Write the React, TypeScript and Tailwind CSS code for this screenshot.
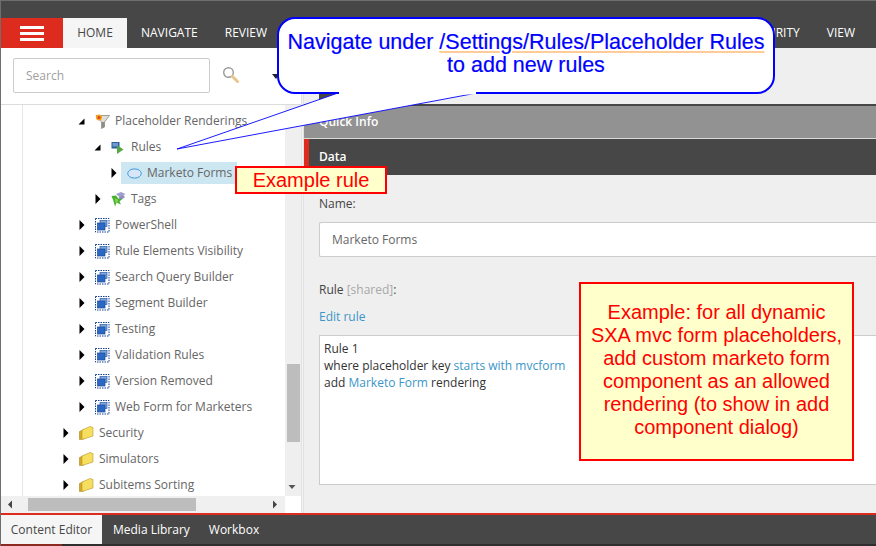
const sans = "font-['Open_Sans',sans-serif]";

function Expanded() {
  return (
    <svg width="7" height="7" viewBox="0 0 7 7" className="shrink-0">
      <path d="M6.5 0.5V6.5H0.5Z" fill="#000" />
    </svg>
  );
}

function Collapsed() {
  return (
    <svg width="6" height="10" viewBox="0 0 6 10" className="shrink-0">
      <path d="M0.5 0V10L5.5 5Z" fill="#000" />
    </svg>
  );
}

function Funnel() {
  return (
    <svg width="15" height="15" viewBox="0 0 15 15">
      <path d="M1 1.5H14.5L9.5 8V13L6.5 14.5V8Z" fill="#dededa" stroke="#8d8a84" strokeWidth="0.8" />
      <path d="M7 8H9.5V13L7 14Z" fill="#8d8d88" />
      <circle cx="4" cy="3.4" r="3" fill="#f3a31d" />
      <circle cx="4" cy="3.4" r="1.5" fill="#e5401e" />
    </svg>
  );
}

function RuleIcon() {
  return (
    <svg width="13" height="13" viewBox="0 0 13 13">
      <rect x="0.5" y="1" width="8" height="6.5" fill="#2d5f9e" />
      <rect x="1.5" y="2" width="5.5" height="3.5" fill="#6f9ad0" />
      <path d="M6 4L12.5 8.5L6 13Z" fill="#55a944" />
    </svg>
  );
}

function EllipseIcon() {
  return (
    <svg width="15" height="11" viewBox="0 0 15 11">
      <ellipse cx="7.5" cy="5.5" rx="6.8" ry="4.6" fill="#d8e6f7" stroke="#3b9ae0" strokeWidth="1" />
    </svg>
  );
}

function TagsIcon() {
  return (
    <svg width="15" height="15" viewBox="0 0 15 15">
      <path d="M5 2L10 0L14.5 2L9 5.5Z" fill="#a09fcc" />
      <path d="M7 6L12 3L14 5L10 8Z" fill="#8f8fbd" />
      <path d="M0.5 4L5 3.5L7.5 7L11.5 6.5L8.5 9.5L10 12.5L5.5 10.5L4 14.5L2.5 9Z" fill="#45b02c" />
      <path d="M3.5 6L7.5 8L5 12Z" fill="#7ed455" />
    </svg>
  );
}

function TemplateIcon() {
  return (
    <svg width="15" height="15" viewBox="0 0 15 15">
      <rect x="0.5" y="0.5" width="13.5" height="13.5" fill="#fff" stroke="#163f96" strokeWidth="1" strokeDasharray="1.5 1" />
      <rect x="5" y="2.5" width="7" height="6" fill="#7fa5dc" stroke="#2a5fae" strokeWidth="0.7" />
      <rect x="2.5" y="5" width="7.5" height="7" fill="#2a68c4" stroke="#1d4c9c" strokeWidth="0.7" />
    </svg>
  );
}

function FolderIcon() {
  return (
    <svg width="15" height="14" viewBox="0 0 15 14">
      <path d="M0.5 5.5L5 3.5V13L0.5 13.5Z" fill="#d6a920" stroke="#a98520" strokeWidth="0.6" />
      <path d="M3 4L11 0.5L14 1.5V10L3 13.5Z" fill="#f6de5e" stroke="#b9992a" strokeWidth="0.6" />
    </svg>
  );
}

type Row = { level: number; open?: boolean; icon: React.ReactNode; label: string; selected?: boolean };

const rows: Row[] = [
  { level: 2, open: true, icon: <Funnel />, label: "Placeholder Renderings" },
  { level: 3, open: true, icon: <RuleIcon />, label: "Rules" },
  { level: 4, icon: <EllipseIcon />, label: "Marketo Forms", selected: true },
  { level: 3, icon: <TagsIcon />, label: "Tags" },
  { level: 2, icon: <TemplateIcon />, label: "PowerShell" },
  { level: 2, icon: <TemplateIcon />, label: "Rule Elements Visibility" },
  { level: 2, icon: <TemplateIcon />, label: "Search Query Builder" },
  { level: 2, icon: <TemplateIcon />, label: "Segment Builder" },
  { level: 2, icon: <TemplateIcon />, label: "Testing" },
  { level: 2, icon: <TemplateIcon />, label: "Validation Rules" },
  { level: 2, icon: <TemplateIcon />, label: "Version Removed" },
  { level: 2, icon: <TemplateIcon />, label: "Web Form for Marketers" },
  { level: 1, icon: <FolderIcon />, label: "Security" },
  { level: 1, icon: <FolderIcon />, label: "Simulators" },
  { level: 1, icon: <FolderIcon />, label: "Subitems Sorting" },
];

const indent: Record<number, string> = { 1: "pl-[58px]", 2: "pl-[74px]", 3: "pl-[90px]", 4: "pl-[106px]" };

function TreeRow({ row }: { row: Row }) {
  return (
    <div className={`flex h-[26px] items-center ${indent[row.level]}`}>
      <div className="flex w-[13px] shrink-0 items-center justify-center">
        {row.open ? <Expanded /> : <Collapsed />}
      </div>
      {row.selected ? (
        <div className="ml-[1px] flex h-[22px] items-center bg-[#cce6f2] pl-[6px] pr-[5px]">
          <div className="flex w-[20px] items-center">{row.icon}</div>
          <span className="text-[12px] text-[#666666]">{row.label}</span>
        </div>
      ) : (
        <div className="ml-[7px] flex items-center">
          <div className="flex w-[20px] items-center">{row.icon}</div>
          <span className="text-[12px] text-[#666666]">{row.label}</span>
        </div>
      )}
    </div>
  );
}

function Tree() {
  return (
    <div className="flex w-[300px] shrink-0 flex-col">
      <div className="flex h-[56px] items-start bg-white pl-[12px] pt-[10px]">
        <div className="flex h-[35px] w-[197px] items-center rounded-[2px] border border-[#cccccc] bg-white pl-[12px] text-[12px] text-[#a0a0a0]">
          Search
        </div>
        <svg width="18" height="18" viewBox="0 0 18 18" className="ml-[12px] mt-[8px]">
          <circle cx="6.5" cy="6.5" r="4.8" fill="#fff" stroke="#9a9a9a" strokeWidth="1.4" />
          <path d="M10.5 10.5L15.5 15.5" stroke="#e8c58a" strokeWidth="3" strokeLinecap="round" />
        </svg>
        <svg width="8" height="5" viewBox="0 0 8 5" className="ml-[32px] mt-[16px]">
          <path d="M0 0H8L4 5Z" fill="#222" />
        </svg>
      </div>
      <div className="h-px bg-[#dcdcdc]" />
      <div className="flex min-h-0 flex-1">
        <div className="flex w-[284px] shrink-0 flex-col">
          <div className="relative h-[391px] overflow-hidden bg-white pt-[3px]">
            <div className="absolute bottom-0 left-[21px] top-0 w-px bg-[#e6e6e6]" />
            {rows.map((r) => (
              <TreeRow key={r.label} row={r} />
            ))}
          </div>
          <div className="flex h-[17px] items-center bg-[#f0f0f0]">
            <svg width="27" height="17" viewBox="0 0 27 17">
              <path d="M7 8.5L11 4.5V12.5Z" fill="#444" />
            </svg>
            <div className="h-[13px] w-[168px] bg-[#bdbdbd]" />
            <svg width="88" height="17" viewBox="0 0 88 17">
              <path d="M81 8.5L77 4.5V12.5Z" fill="#444" />
            </svg>
          </div>
        </div>
        <div className="flex w-[16px] shrink-0 flex-col bg-[#efefef]">
          <div className="ml-[2px] mt-[259px] h-[78px] w-[13px] bg-[#bdbdbd]" />
          <svg width="16" height="10" viewBox="0 0 16 10" className="mt-[41px]">
            <path d="M3.5 2H10.5L7 6Z" fill="#555" />
          </svg>
          <div className="mt-auto h-[17px] bg-white" />
        </div>
      </div>
    </div>
  );
}

function Editor() {
  return (
    <div className="flex min-w-0 flex-1 flex-col bg-[#efefef]">
      <div className="flex h-[56px] shrink-0 items-end pl-[15px]">
        <div className="h-[11px] w-[40px] bg-[#474747]" />
      </div>
      <div className="h-[2px] bg-[#474747]" />
      <div className="flex h-[32px] items-center bg-[#929292] pl-[15px] text-[12px] font-semibold text-white">Quick Info</div>
      <div className="h-px bg-[#d8d8d8]" />
      <div className="flex h-[36px] items-center border-l-[5px] border-[#dd2c1e] bg-[#474747] pl-[10px] text-[12px] font-semibold text-white">Data</div>
      <div className="flex flex-col pl-[15px] text-[12px]">
        <div className="mt-[20px] leading-[17px] text-[#444444]">Name:</div>
        <div className="mt-[10px] flex h-[35px] items-center rounded-l-[2px] border border-r-0 border-[#cccccc] bg-white pl-[12px] text-[#666666]">Marketo Forms</div>
        <div className="mt-[24px] leading-[17px] text-[#444444]">
          Rule <span className="text-[#a8a8a8]">[shared]</span>:
        </div>
        <div className="mt-[10px] leading-[17px] text-[#3a96c8]">Edit rule</div>
        <div className="mt-[10px] h-[150px] border border-r-0 border-[#cccccc] bg-white px-[4px] pt-[4px] leading-[17px] text-[#333333]">
          <div>Rule 1</div>
          <div>
            where placeholder key <span className="text-[#3a96c8]">starts with mvcform</span>
          </div>
          <div>
            add <span className="text-[#3a96c8]">Marketo Form</span> rendering
          </div>
        </div>
      </div>
    </div>
  );
}

export default function App() {
  return (
    <div className={`relative flex h-[546px] w-[876px] flex-col overflow-hidden border-l border-t border-[#6e6e6e] bg-[#474747] ${sans}`}>
      <div className="flex h-[47px] shrink-0 items-end pr-[21px] text-[12px] text-white">
        <div className="flex h-[30px] w-[62px] items-center justify-center bg-[#dd2c1e]">
          <div className="flex w-[24px] flex-col gap-[3px]">
            <div className="h-[3px] bg-white" />
            <div className="h-[3px] bg-white" />
            <div className="h-[3px] bg-white" />
          </div>
        </div>
        <div className="flex h-[30px] w-[64px] items-center justify-center bg-[#f5f5f5] text-[#474747]">HOME</div>
        <div className="flex h-[30px] items-center pl-[14px]">NAVIGATE</div>
        <div className="flex h-[30px] items-center pl-[27px]">REVIEW</div>
        <div className="ml-auto flex h-[30px] items-center">SECURITY</div>
        <div className="flex h-[30px] items-center pl-[27px]">VIEW</div>
      </div>

      <div className="flex h-[465px] shrink-0">
        <Tree />
        <div className="w-[3px] shrink-0 border-x border-[#e2e2e2] bg-[#f3f3f3]" />
        <Editor />
      </div>

      <div className="h-[2px] shrink-0 bg-[#dd2c1e]" />
      <div className="flex h-[29px] shrink-0 items-stretch text-[12px] text-white">
        <div className="flex w-[101px] items-center justify-center bg-[#f5f5f5] text-[#474747]">Content Editor</div>
        <div className="flex items-center pl-[11px]">Media Library</div>
        <div className="flex items-center pl-[19px]">Workbox</div>
      </div>
      <div className="flex h-[2px] shrink-0 bg-[#2e2e2e]">
        <div className="w-[61px] bg-[#8c2a22]" />
      </div>

      <svg className="pointer-events-none absolute left-[-1px] top-[-1px]" width="876" height="546" viewBox="0 0 876 546">
        <path d="M338 93L177 149L477 93Z" fill="#fff" stroke="#0000ff" strokeWidth="0.9" />
      </svg>
      <div className="absolute left-[276px] top-[16px] flex h-[77px] w-[498px] flex-col items-center rounded-[18px] border-2 border-[#0000ff] bg-white pt-[12px] font-['Liberation_Sans',sans-serif] text-[21.5px] leading-[23px] text-[#0000ff] [-webkit-text-stroke:0.2px_#0000ff]">
        <div className="whitespace-nowrap">
          Navigate under <span className="underline decoration-[#ffcc99] decoration-2 underline-offset-[2px]">/Settings/Rules/Placeholder Rules</span>
        </div>
        <div>to add new rules</div>
      </div>
      <svg className="pointer-events-none absolute left-[-1px] top-[-1px]" width="876" height="546" viewBox="0 0 876 546">
        <rect x="339" y="91.5" width="137" height="3" fill="#fff" />
      </svg>
      <div className="absolute left-[234px] top-[165px] flex h-[28px] w-[152px] items-center justify-center border-2 border-[#ff0000] bg-[#ffffcc] font-['Liberation_Sans',sans-serif] text-[20px] text-[#ff0000]">
        Example rule
      </div>
      <div className="absolute left-[578px] top-[281px] flex h-[179px] w-[275px] flex-col justify-center border-2 border-[#ff0000] bg-[#ffffcc] pb-[3px] text-center font-['Liberation_Sans',sans-serif] text-[20px] leading-[23px] text-[#ff0000]">
        <div>Example: for all dynamic</div>
        <div>SXA mvc form placeholders,</div>
        <div>add custom marketo form</div>
        <div>component as an allowed</div>
        <div>rendering (to show in add</div>
        <div>component dialog)</div>
      </div>
    </div>
  );
}
